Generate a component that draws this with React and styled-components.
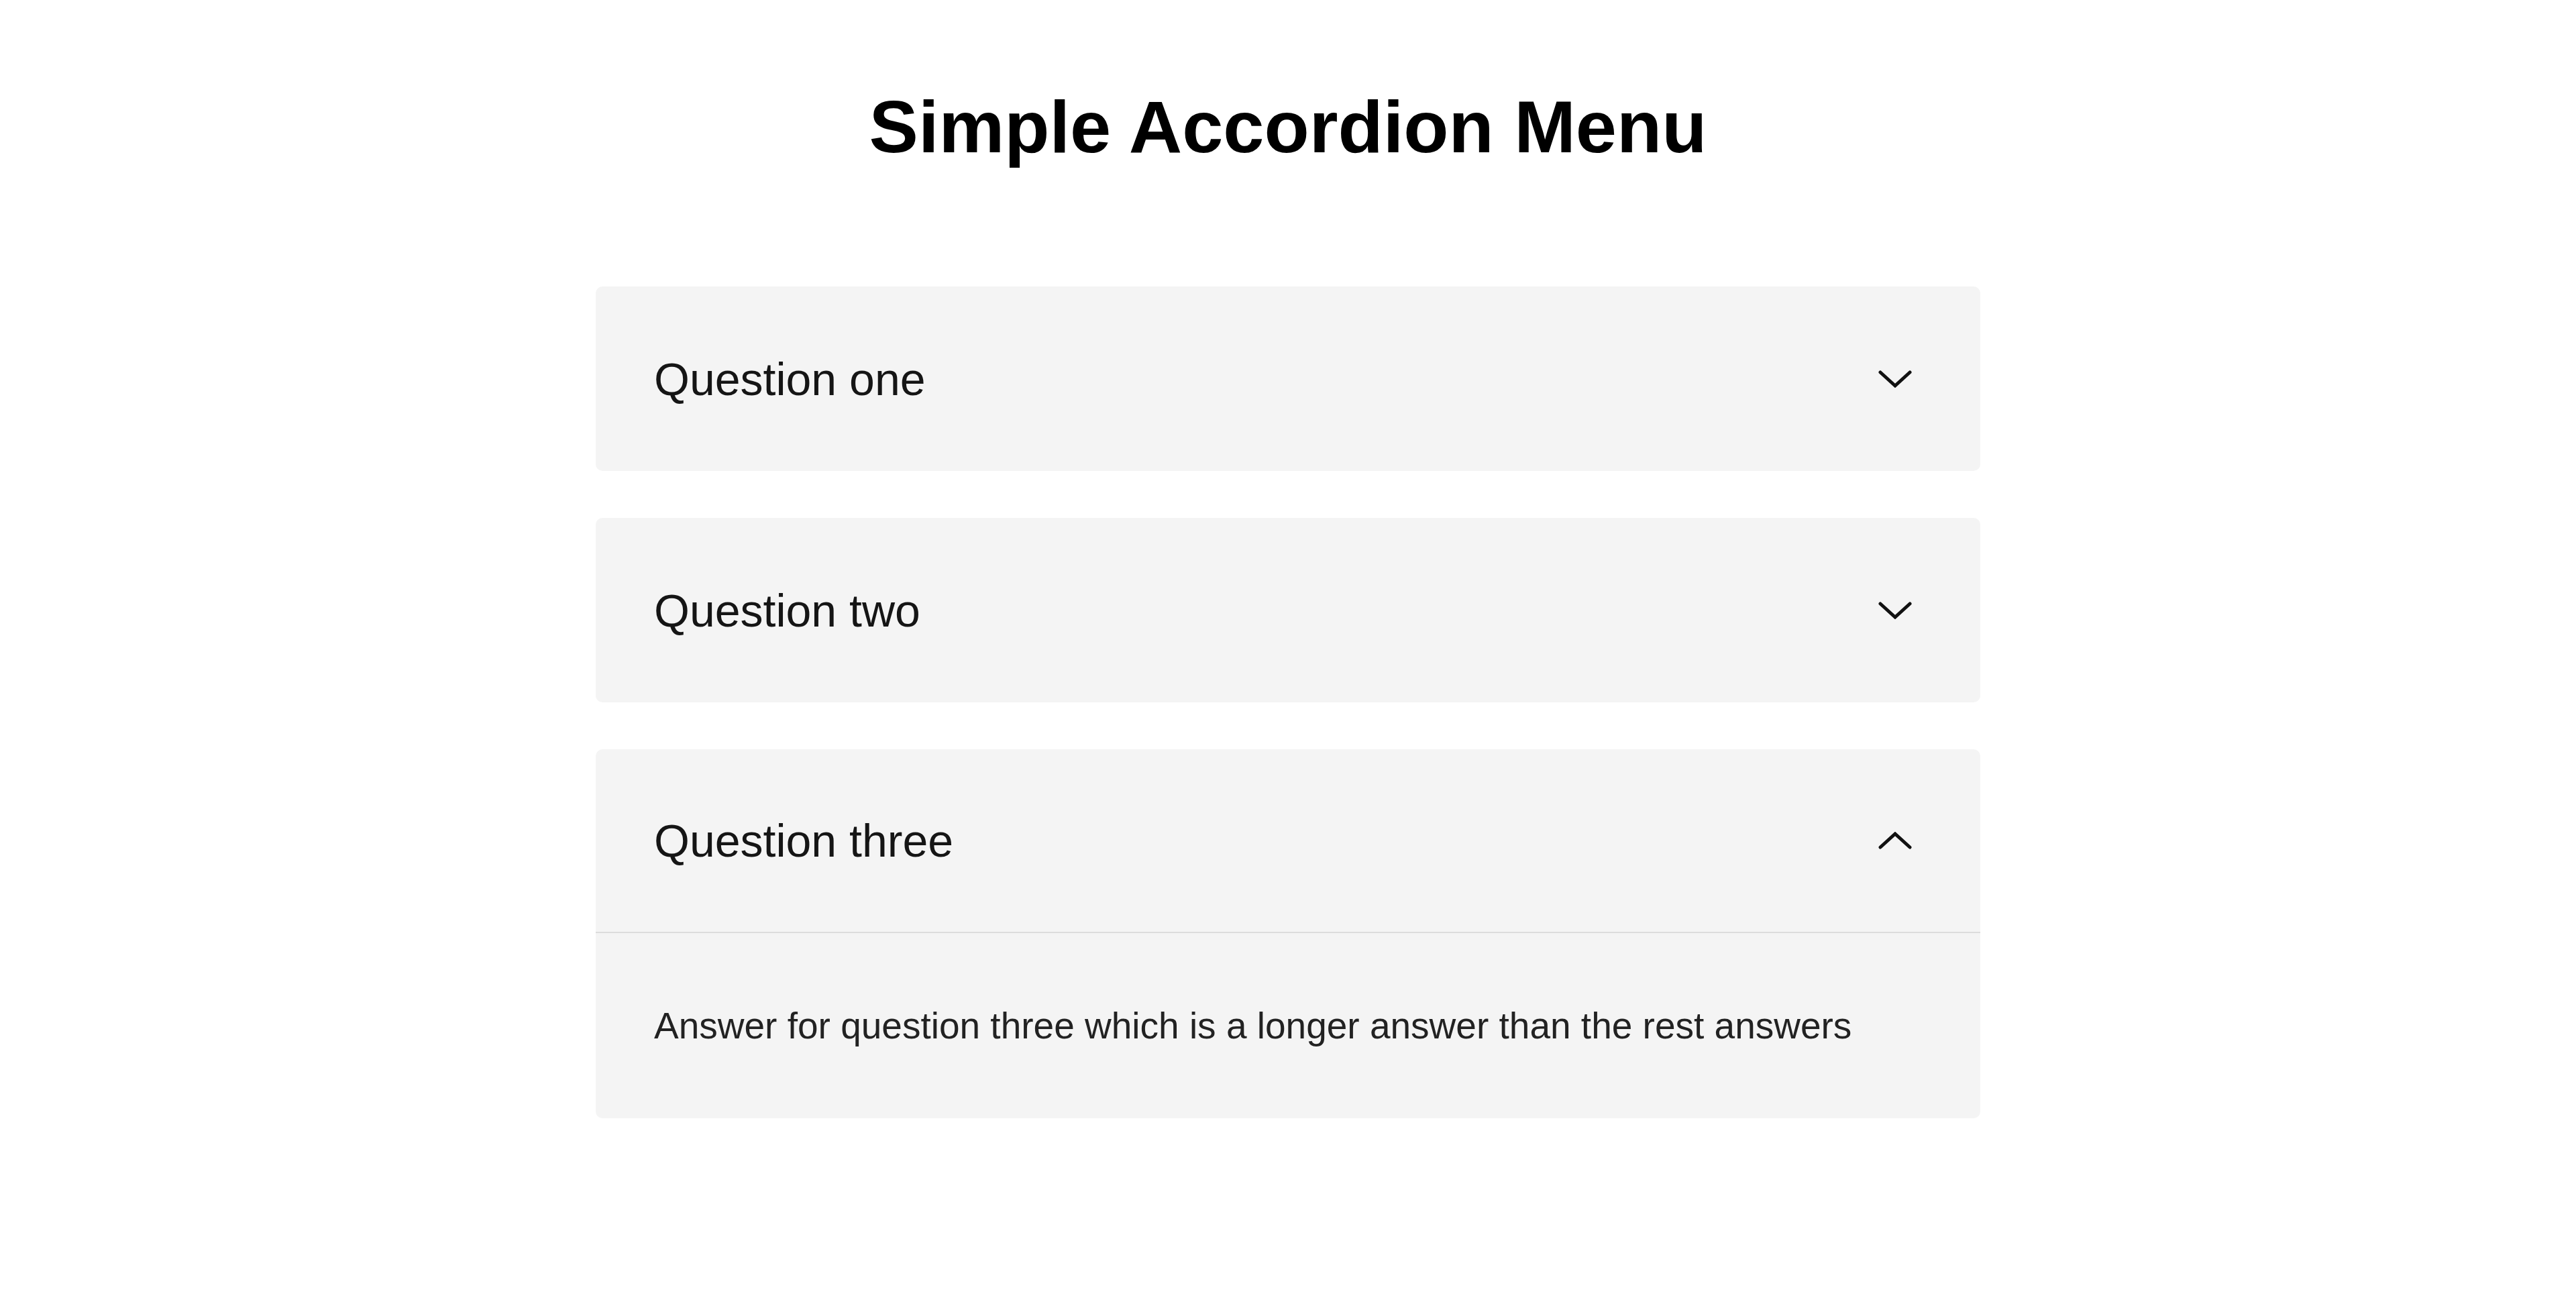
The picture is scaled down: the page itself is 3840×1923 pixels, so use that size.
import React, { useState } from "react";
import styled, { createGlobalStyle } from "styled-components";

const GlobalStyle = createGlobalStyle`
  html, body {
    margin: 0;
    padding: 0;
    background: #ffffff;
  }
  body {
    font-family: "Liberation Sans", Arial, sans-serif;
    color: #111111;
  }
  * { box-sizing: border-box; }
`;

const Page = styled.main`
  display: flex;
  flex-direction: column;
  align-items: center;
  padding-top: 126px;
  padding-bottom: 120px;
`;

const Title = styled.h1`
  margin: 0 0 175px;
  font-size: 110px;
  font-weight: 700;
  line-height: 126px;
  color: #000000;
  text-align: center;
`;

const List = styled.div`
  width: 2064px;
  display: flex;
  flex-direction: column;
  gap: 70px;
`;

const Item = styled.section`
  background: #f4f4f4;
  border-radius: 10px;
  overflow: hidden;
`;

const Header = styled.button`
  all: unset;
  box-sizing: border-box;
  width: 100%;
  height: ${(p) => (p.$open ? "274px" : "275px")};
  display: flex;
  align-items: center;
  justify-content: space-between;
  padding: 0 102px 0 87px;
  cursor: pointer;
  border-bottom: ${(p) => (p.$open ? "2px solid #dcdcdc" : "none")};
  font-family: "Liberation Sans", Arial, sans-serif;
`;

const Question = styled.span`
  font-size: 68px;
  line-height: 1;
  color: #151515;
`;

const Chevron = styled.svg`
  width: 50px;
  height: 26px;
  display: block;
  transform: ${(p) => (p.$open ? "rotate(180deg)" : "none")};
`;

const Answer = styled.div`
  padding: 0 87px;
  height: 276px;
  display: flex;
  align-items: center;
  font-size: 55px;
  color: #222222;
`;

const items = [
  { q: "Question one", a: "Answer for question one" },
  { q: "Question two", a: "Answer for question two" },
  {
    q: "Question three",
    a: "Answer for question three which is a longer answer than the rest answers",
  },
];

function ChevronIcon({ open }) {
  return (
    <Chevron $open={open} viewBox="0 0 50 26" aria-hidden="true">
      <polyline
        points="3,3 25,23 47,3"
        fill="none"
        stroke="#111"
        strokeWidth="5"
        strokeLinecap="round"
        strokeLinejoin="miter"
      />
    </Chevron>
  );
}

export default function App() {
  const [open, setOpen] = useState(2);
  return (
    <>
      <GlobalStyle />
      <Page>
        <Title>Simple Accordion Menu</Title>
        <List>
          {items.map((it, i) => {
            const isOpen = open === i;
            return (
              <Item key={it.q}>
                <Header
                  $open={isOpen}
                  onClick={() => setOpen(isOpen ? null : i)}
                >
                  <Question>{it.q}</Question>
                  <ChevronIcon open={isOpen} />
                </Header>
                {isOpen && <Answer>{it.a}</Answer>}
              </Item>
            );
          })}
        </List>
      </Page>
    </>
  );
}
